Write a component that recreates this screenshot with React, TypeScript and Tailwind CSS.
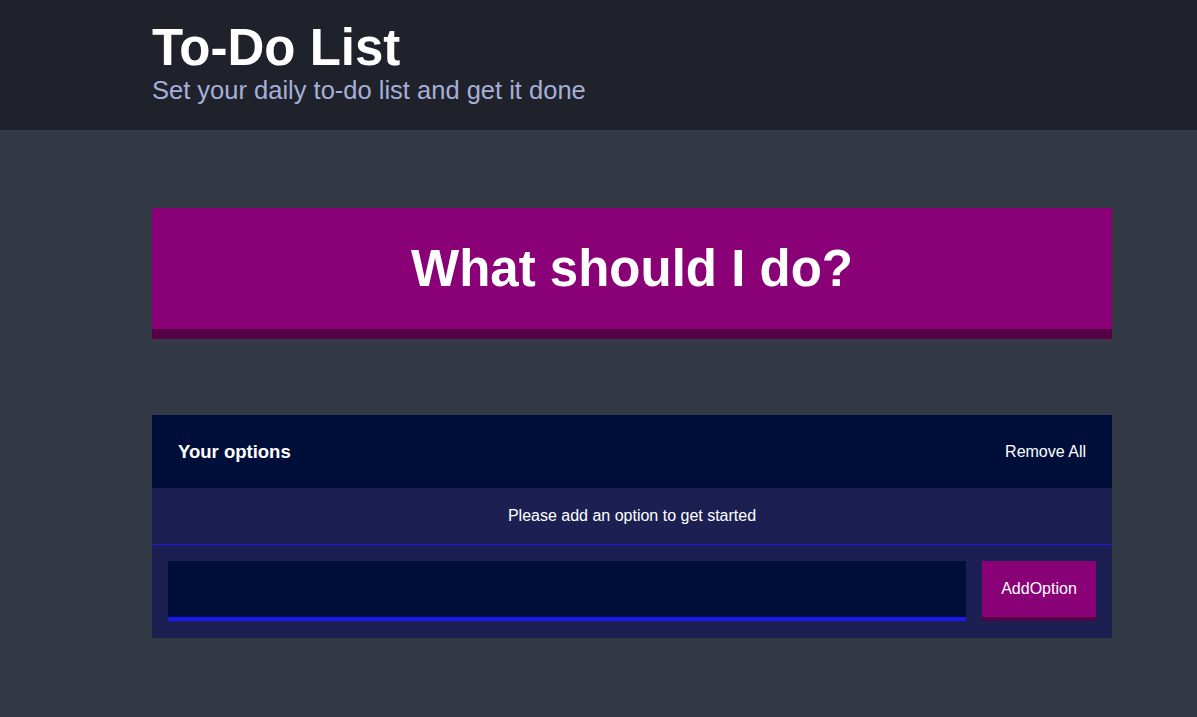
export default function App() {
  return (
    <div className="min-h-[717px] bg-[#333a45] font-['Liberation_Sans',Arial,sans-serif] text-white">
      <header className="h-[130px] bg-[#20222b]">
        <div className="ml-[152px] w-[960px] pt-[20px]">
          <h1 className="text-[51px] font-bold leading-[55px]">To-Do List</h1>
          <h2 className="text-[25.5px] leading-[30px] text-[#a5afd7]">Set your daily to-do list and get it done</h2>
        </div>
      </header>

      <main className="ml-[152px] w-[960px] pt-[78px]">
        <div className="flex h-[131px] items-center justify-center border-b-[10px] border-[#560046] bg-[#8a0077]">
          <h1 className="text-[51px] font-bold leading-none">What should I do?</h1>
        </div>

        <div className="mt-[76px] bg-[#1c1f52]">
          <div className="flex h-[73px] items-center justify-between bg-[#000f3a] px-[26px]">
            <h3 className="text-[18.5px] font-bold">Your options</h3>
            <button className="text-[16px]">Remove All</button>
          </div>
          <div className="flex h-[56px] items-center justify-center text-[16px]">
            Please add an option to get started
          </div>
          <div className="h-px bg-[#1818f0]" />
          <form className="flex items-start gap-[16px] px-[16px] pt-[16px] pb-[17px]">
            <input className="h-[60px] flex-1 border-b-[4px] border-[#1818f0] bg-[#000f3a] px-3 text-white outline-none" />
            <button
              type="button"
              className="h-[60px] w-[114px] border-b-[4px] border-[#560046] bg-[#8a0077] text-[16px]"
            >
              AddOption
            </button>
          </form>
        </div>
      </main>
    </div>
  );
}
